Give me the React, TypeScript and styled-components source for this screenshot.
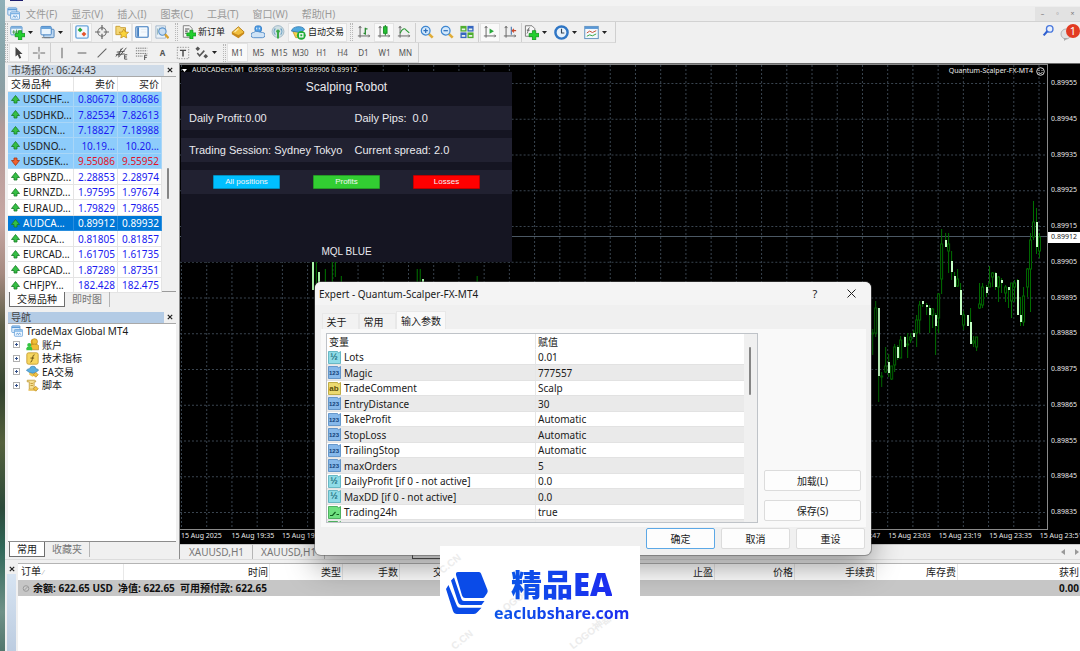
import React from "react";
import styled, { createGlobalStyle, css } from "styled-components";

const ui = `"Noto Sans", "Noto Sans CJK SC", sans-serif`;
const arial = `"Liberation Sans", Arial, sans-serif`;

const GlobalStyle = createGlobalStyle`
  *, *::before, *::after { box-sizing: border-box; }
  body { margin: 0; background: #f0f0f0; font: 10px/14px ${ui}; color: #1a1a1a; overflow: hidden; }
  button { font: inherit; color: inherit; margin: 0; padding: 0; border: 0; background: none; }
  table { border-collapse: separate; border-spacing: 0; }
  th { font-weight: 400; }
  svg { display: block; flex: none; }
`;

/* ---------- frame ---------- */

const Screen = styled.div`
  display: flex;
  min-height: 100vh;
`;
const Wallpaper = styled.div`
  flex: 0 0 5px;
  background: linear-gradient(#8fb0b8 0, #88a5aa 8%, #8c9ea3 14%, #b59a98 20%, #c6a7a3 34%, #a58a80 42%, #5c5f48 50%, #34442f 60%, #54603c 68%, #2c4a3a 78%, #2f6657 84%, #6f9187 94%, #53776d 100%);
`;
const Window = styled.div`
  position: relative;
  display: flex;
  flex-direction: column;
  flex: 1;
  min-width: 0;
  background: #f0f0f0;
`;
const TitleStrip = styled.div`
  height: 6px;
  padding-left: 5px;
  background: #f3f3f3;
`;
const MenuBar = styled.nav`
  display: flex;
  align-items: center;
  gap: 14px;
  height: 16px;
  padding-left: 2px;
  border-bottom: 1px solid #d2d2d2;
  background: #ededed;
  color: #999;
  svg { margin-right: -8px; }
`;
const WindowButtons = styled.div`
  display: flex;
  margin-left: auto;
  background: #e2e2e2;
  button { width: 15px; height: 14px; font-size: 7px; color: #777; }
`;
const Toolbar = styled.div<{ $last?: boolean }>`
  display: flex;
  align-items: center;
  height: ${(p) => (p.$last ? "20px" : "21px")};
  background: #f0f0f0;
`;
const Grip = styled.i`
  width: 3px;
  height: 18px;
  margin: 0 1px 0 3px;
  border: 1px dotted #b8b8b8;
  border-width: 0 1px;
`;
const ToolGroup = styled.div`
  display: flex;
  align-items: center;
  height: 100%;
  padding-right: 2px;
  border-right: 1px solid #cfcfcf;
  border-bottom: 1px solid #d8d8d8;
  > ${Grip}:first-child { margin-left: 0; }
`;
const Separator = styled.i`
  width: 1px;
  height: 19px;
  margin: 0 1px;
  background: #cfcfcf;
`;
const ToolButton = styled.button<{ $on?: boolean; $wide?: boolean }>`
  display: flex;
  align-items: center;
  justify-content: center;
  gap: 2px;
  width: ${(p) => (p.$wide ? "auto" : "20px")};
  padding: ${(p) => (p.$wide ? "0 3px" : "0")};
  height: 19px;
  font-size: 9px;
  white-space: nowrap;
  ${(p) => p.$on && css`background: #f9f9f9; box-shadow: inset 0 0 0 1px #e3e3e3;`}
`;
const SplitButton = styled.button<{ $tight?: boolean }>`
  display: flex;
  align-items: center;
  gap: 3px;
  width: ${(p) => (p.$tight ? "27px" : "30px")};
  height: 19px;
  padding-left: 1px;
`;
const PeriodButton = styled(ToolButton)`
  width: 21px;
  font-size: 8px;
  color: #555;
`;
const ToolbarRight = styled.div`
  display: flex;
  gap: 5px;
  margin-left: auto;
`;

/* ---------- docks ---------- */

const Main = styled.div`
  position: relative;
  display: flex;
  z-index: 1;
`;
const Dock = styled.aside`
  display: flex;
  flex-direction: column;
  flex: 0 0 175px;
  padding: 1px 3px 2px 3px;
  border-right: 1px solid #8c8c8c;
`;
const DockTitle = styled.header<{ $active?: boolean }>`
  display: flex;
  align-items: center;
  height: 12px;
  margin-top: ${(p) => (p.$active ? "4px" : "0")};
  h2 {
    flex: 1;
    margin: 0;
    padding-left: 3px;
    font: 400 10px/11px ${ui};
    height: 11px;
    color: #444;
    background: ${(p) => (p.$active ? "#b3cbe5" : "#cfdbe8")};
  }
  button { width: 12px; height: 11px; display: grid; place-items: center; }
`;
const WatchBox = styled.div`
  display: flex;
  height: 216px;
  border-top: 1px solid #a9a9a9;
  border-bottom: 1px solid #9a9a9a;
  background: #f0f0f0;
`;
const WatchTable = styled.table`
  width: 154px;
  table-layout: fixed;
  background: #fff;
  th, td {
    height: 15px;
    padding: 0 2px 0 0;
    line-height: 14px;
    text-align: right;
    overflow: hidden;
    white-space: nowrap;
    border-right: 1px solid #e4e4e4;
    border-bottom: 1px solid #e4e4e4;
  }
  th:first-child, td:first-child { text-align: left; padding-left: 3px; }
  tbody tr:nth-child(even) td { height: 16px; }
`;
const WatchRow = styled.tr<{ $tone?: string }>`
  color: #1a1af0;
  td:first-child { color: #1a1a1a; }
  ${(p) => (p.$tone === "sky" || p.$tone === "red") && css`background: #8dccfb; td { border-color: #a9d6f7; }`}
  ${(p) => p.$tone === "red" && css`color: #e01428;`}
  ${(p) => p.$tone === "sel" && css`background: #0078d7; color: #fff; td, td:first-child { color: #fff; border-color: #2a8ede; }`}
`;
const SymbolCell = styled.span`
  display: flex;
  align-items: center;
  gap: 3px;
`;
const ScrollTrack = styled.div<{ $offset: number; $size: number }>`
  flex: 1;
  background: #f0f0f0;
  &::before {
    content: "";
    display: block;
    width: 2px;
    height: ${(p) => p.$size}px;
    margin: ${(p) => p.$offset}px 0 0 5px;
    border-radius: 1px;
    background: #858585;
  }
`;
const DockTabs = styled.div`
  display: flex;
  height: 15px;
  padding-left: 1px;
`;
const DockTab = styled.button<{ $on?: boolean }>`
  height: 15px;
  padding: 0 7px;
  color: #777;
  line-height: 13px;
  border-right: 1px solid #b5b5b5;
  ${(p) => p.$on && css`background: #fff; color: #1a1a1a; border: 1px solid #6e6e6e; border-top: 0;`}
`;
const Tree = styled.ul`
  flex: 1;
  margin: 0;
  padding: 0 0 0 3px;
  list-style: none;
  background: #fff;
  border-top: 1px solid #a9a9a9;
  border-bottom: 1px solid #8c8c8c;
  li { display: flex; align-items: center; gap: 3px; height: 14px; white-space: nowrap; }
  li:nth-child(even) { height: 13px; }
`;
const Expander = styled.button`
  width: 7px;
  height: 7px;
  margin: 0 3px 0 2px;
  border: 1px solid #b0b0b0;
  background: linear-gradient(#34508a, #34508a) center / 3px 1px no-repeat, linear-gradient(#34508a, #34508a) center / 1px 3px no-repeat, #fff;
`;

/* ---------- chart ---------- */

const ChartColumn = styled.section`
  position: relative;
  display: flex;
  flex-direction: column;
  flex: 1;
  min-width: 0;
`;
const Chart = styled.div`
  display: grid;
  grid-template-columns: 1fr 32px;
  grid-template-rows: 466px 14px;
  border-top: 1px solid #6a6a6a;
  background: #000;
  color: #e8e8e8;
  font-size: 7px;
  line-height: 10px;
`;
const Plot = styled.div`
  position: relative;
  overflow: hidden;
  border: 1px solid #8a8a8a;
  border-left: 0;
  > svg { width: 100%; height: 100%; }
`;
const PlotCaption = styled.div`
  position: absolute;
  z-index: 1;
  top: 0;
  left: 2px;
  display: flex;
  align-items: center;
  gap: 5px;
  white-space: pre;
`;
const ExpertCaption = styled(PlotCaption)`
  left: auto;
  right: 2px;
  top: 1px;
  gap: 3px;
`;
const PriceAxis = styled.div`
  position: relative;
  display: flex;
  flex-direction: column;
  padding-left: 3px;
  justify-content: space-between;
  height: 439px;
  margin-top: 14px;
`;
const PriceTag = styled.output`
  position: absolute;
  left: 0;
  right: 0;
  top: 154px;
  height: 11px;
  padding-left: 3px;
  background: #fff;
  color: #222;
`;
const TimeAxis = styled.div`
  grid-column: 1 / -1;
  display: grid;
  grid-template-columns: repeat(18, 5.62%);
  overflow: hidden;
  padding-left: 1px;
  line-height: 12px;
  span { white-space: nowrap; }
`;
const ChartTabs = styled.div`
  display: flex;
  align-items: center;
  height: 15px;
  padding-left: 1px;
  color: #777;
  border-top: 1px solid #c8c8c8;
`;
const ChartTab = styled.button<{ $on?: boolean }>`
  height: 14px;
  padding: 0 8px;
  line-height: 13px;
  border-right: 1px solid #b5b5b5;
  ${(p) => p.$on && css`margin-left: 87px; color: #1a1a1a; border: 1px solid #555; border-top: 0;`}
`;
const TabArrows = styled.div`
  display: flex;
  gap: 10px;
  margin-left: auto;
  padding-right: 1px;
`;

const RobotPanel = styled.div`
  position: absolute;
  top: 9px;
  left: 1px;
  width: 331px;
  height: 190px;
  display: flex;
  flex-direction: column;
  gap: 8px;
  background: #151522;
  color: #e9e9ee;
  font: 11px/24px ${arial};
  h3 { margin: 0; height: 26px; font: 400 12px/30px ${arial}; text-align: center; }
  footer { margin-top: auto; font-size: 10px; line-height: 20px; text-align: center; }
`;
const RobotStrip = styled.div`
  display: grid;
  grid-template-columns: 1fr 1fr;
  height: 24px;
  background: #212131;
  span { padding-left: 8px; white-space: pre; }
`;
const RobotActions = styled(RobotStrip)`
  grid-template-columns: repeat(3, 67px);
  justify-content: center;
  align-content: center;
  gap: 33px;
`;
const RobotButton = styled.button<{ $color: string }>`
  height: 14px;
  border: 1px solid rgba(0, 0, 0, 0.25);
  border-radius: 1px;
  background: ${(p) => p.$color};
  color: #f4f4f4;
  font: 8px/12px ${arial};
`;

/* ---------- dialog ---------- */

const Dialog = styled.div`
  position: absolute;
  z-index: 2;
  top: 219px;
  left: 310px;
  width: 556px;
  display: flex;
  flex-direction: column;
  border-radius: 6px;
  background: #f0f0f0;
  box-shadow: 0 0 0 1px rgba(90, 90, 90, 0.5), 0 12px 30px rgba(0, 0, 0, 0.38);
`;
const DialogTitle = styled.header`
  display: flex;
  align-items: center;
  height: 23px;
  padding: 0 13px 0 4px;
  border-radius: 6px 6px 0 0;
  background: #f4f4f4;
  h2 { flex: 1; margin: 0; font: 400 10px/14px ${ui}; }
  button { width: 14px; height: 14px; display: grid; place-items: center; margin-left: 22px; font-size: 11px; }
`;
const DialogTabs = styled.div`
  display: flex;
  align-items: flex-end;
  height: 24px;
  padding-left: 7px;
`;
const DialogTab = styled.button<{ $on?: boolean }>`
  width: ${(p) => (p.$on ? "50px" : "37px")};
  height: ${(p) => (p.$on ? "18px" : "16px")};
  padding-right: ${(p) => (p.$on ? "0" : "8px")};
  line-height: 16px;
  background: ${(p) => (p.$on ? "#f9f9f9" : "#f2f2f2")};
  border: 1px solid #e8e8e8;
  border-bottom: 0;
`;
const DialogPage = styled.div`
  display: flex;
  gap: 6px;
  margin: 0 5px 0 6px;
  padding: 4px 5px;
  height: 198px;
  background: #f9f9f9;
`;
const ParamBox = styled.div`
  display: flex;
  width: 432px;
  height: 190px;
  overflow: hidden;
  border: 1px solid #bfc3c8;
  background: #fff;
`;
const ParamTable = styled.table`
  width: 417px;
  height: 202px;
  flex: none;
  table-layout: fixed;
  th, td {
    height: 15px;
    padding: 0 2px;
    line-height: 14px;
    text-align: left;
    white-space: nowrap;
    border-bottom: 1px solid #e2e2e2;
  }
  th { height: 16px; border-color: #fff; }
  th + th, td + td { border-left: 1px solid #e6e6e6; }
  td:first-child { padding-left: 1px; }
  tbody tr:nth-child(even) td { height: 16px; background: #eaeaea; }
`;
const ParamName = styled.span`
  display: flex;
  align-items: center;
  gap: 3px;
`;
const PageActions = styled.div`
  display: flex;
  flex-direction: column;
  justify-content: flex-end;
  gap: 9px;
  flex: 1;
  padding-bottom: 2px;
`;
const PushButton = styled.button<{ $primary?: boolean }>`
  height: 21px;
  min-width: 69px;
  border: 1px solid ${(p) => (p.$primary ? "#5ca8e6" : "#dcdcdc")};
  border-radius: 2px;
  background: #fdfdfd;
`;
const DialogFooter = styled.footer`
  display: flex;
  justify-content: flex-end;
  gap: 6px;
  padding: 1px 6px 6px;
`;

/* ---------- terminal ---------- */

const Terminal = styled.section`
  display: flex;
  flex: 1;
  border-top: 1px solid #dcdcdc;
  padding-top: 3px;
`;
const TerminalHandle = styled.div`
  flex: 0 0 13px;
  padding-left: 2px;
  button { display: grid; place-items: center; width: 9px; height: 11px; }
  &::after { content: ""; display: block; width: 9px; height: calc(100% - 11px); background: linear-gradient(#d7e4f2, #bccce0); }
`;
const OrdersPane = styled.div`
  flex: 1;
  background: #fff;
  border-top: 1px solid #b4b4b4;
`;
const OrdersTable = styled.table`
  width: 100%;
  table-layout: fixed;
  th, td { height: 16px; padding: 0 1px 0 3px; line-height: 15px; text-align: right; white-space: nowrap; }
  th { border-right: 1px solid #e8e8e8; overflow: hidden; }
  th:last-child { border: 0; }
  th:first-child, td:first-child { text-align: left; }
  td { background: #c6c6c6; font-weight: 700; color: #111; }
`;
const SortMark = styled.span`
  color: #aaa;
  font-size: 7px;
`;
const Balance = styled.span`
  display: flex;
  align-items: center;
  gap: 3px;
  white-space: pre;
`;

const LogoCard = styled.div`
  position: absolute;
  left: 435px;
  bottom: 0;
  width: 200px;
  height: 105px;
  z-index: 2;
  overflow: hidden;
  display: flex;
  gap: 5px;
  padding: 24px 0 0 5px;
  background: #fff;
`;
const LogoText = styled.div`
  position: relative;
  display: flex;
  flex-direction: column;
  align-items: center;
  strong { height: 31px; font: 900 31px/28px "Noto Sans", "Noto Sans CJK SC", sans-serif; }
  strong, span { background: linear-gradient(90deg, #0a55e8, #1d2cf0); background-clip: text; color: transparent; }
  span { font: 700 16px/24px "Noto Sans", sans-serif; }
`;
const Watermark = styled.span<{ $x: number; $y: number }>`
  position: absolute;
  left: ${(p) => p.$x}px;
  top: ${(p) => p.$y}px;
  transform: rotate(-38deg);
  color: #ececec;
  font: 700 10px/12px ${arial};
`;

/* ---------- icons ---------- */

const Caret = () => (
  <svg width="5" height="3" viewBox="0 0 5 3"><path d="M0 0h5L2.500 3z" fill="#222" /></svg>
);
const Cross = () => (
  <svg width="6" height="6" viewBox="0 0 6 6"><path d="M.8.8l4.400 4.400M5.200.8L.8 5.200" stroke="#222" strokeWidth="1.200" /></svg>
);
const plus = <path d="M9 6h3.500v3H16v3.500h-3.500V16H9v-3.500H5.500V9H9z" fill="#22cf2e" stroke="#0c8f18" strokeWidth=".8" />;
const axes = <path d="M3.500 1.500v13M1 12.500h13.500M2 3.500l1.500-2 1.500 2M13 11l1.500 1.500L13 14" fill="none" stroke="#666" strokeWidth="1.100" />;
const lens = (
  <>
    <path d="M9.500 9.500l5 5" stroke="#e0ac38" strokeWidth="3" />
    <circle cx="6.500" cy="6.500" r="5" fill="#d3e8fb" stroke="#3e86d0" strokeWidth="1.400" />
  </>
);
const pic: Record<string, React.ReactNode> = {
  mt4: (<><rect x="1" y="1" width="11" height="9" rx="1" fill="#dcecfb" stroke="#5b9ad6" /><path d="M1 3h11" stroke="#5b9ad6" strokeWidth="2" /><rect x="4.500" y="6" width="11" height="9" rx="1" fill="#eff7ff" stroke="#5b9ad6" /><path d="M4.500 8h11" stroke="#7db3e4" strokeWidth="2" /><path d="M7 13l1.500-2.500L10 13l1.500-2.500L13 13" stroke="#5b9ad6" fill="none" /></>),
  newChart: (<><rect x=".8" y="1.500" width="12" height="9" rx="1" fill="#e9f3fb" stroke="#5d95cc" /><path d="M1 3h12" stroke="#7fb0de" strokeWidth="2" /><path d="M2.500 7.500h7M4 5.500v4M7 5v4" stroke="#3f9a4a" />{plus}</>),
  profiles: (<><rect x="4" y="4.500" width="11" height="9" rx="1" fill="#bcd7f1" stroke="#4f83b8" /><rect x="1" y="1.500" width="11" height="9" rx="1" fill="#e9f4fd" stroke="#3f80c4" /><path d="M1 3.200h11" stroke="#6aa5dc" strokeWidth="2.200" /><path d="M2 13.500h9" stroke="#777" /></>),
  watch: (<><rect x="1" y="1" width="14" height="14" rx="1.500" fill="#f2f8fe" stroke="#6aa5dc" strokeWidth="1.600" /><path d="M5.800 2.800l2.800 2.800-2.800 2.800L3 5.600z" fill="#27a83a" /><path d="M10.200 7.600l2.800 2.800-2.800 2.800-2.800-2.800z" fill="#e4532a" /></>),
  crosshair: (<><circle cx="8" cy="8" r="4.800" fill="none" stroke="#666" strokeWidth="1.200" /><path d="M8 0v6M8 10v6M0 8h6M10 8h6" stroke="#666" strokeWidth="1.400" /></>),
  navigator: (<><path d="M1 1.500h4.500l1 1.500h5.500V11H1z" fill="#f4d777" stroke="#c79a2c" /><path d="M10 4.500l1.700 3.400 3.800.5-2.800 2.600.7 3.800L10 13l-3.400 1.800.7-3.800-2.800-2.600 3.800-.5z" fill="#fbd43a" stroke="#bd8a18" strokeWidth=".8" /></>),
  terminal: (<><rect x="1" y="2" width="14" height="12" rx="1" fill="#f4faff" stroke="#3a78bd" strokeWidth="1.300" /><path d="M3.500 2.500v11" stroke="#3a78bd" strokeWidth="2" /><path d="M7 5h6M7 8h6" stroke="#e2e8ee" /></>),
  tester: (<><path d="M1 1h11v14H1z" fill="#eaf2f9" stroke="#9fb4c8" /><path d="M3 4v7M5 3v6M8 4v8" stroke="#8aa" /><circle cx="8.500" cy="7.500" r="4.200" fill="#c9def2" stroke="#5b93cc" strokeWidth="1.200" /><path d="M11.500 10.500l4 4.500" stroke="#d9a02a" strokeWidth="2.600" /></>),
  order: (<><path d="M1.500.8h7l3 3V14h-10z" fill="#f6f6f6" stroke="#777" /><path d="M3.500 4.500h5M3.500 7h3M3.500 9.500h2" stroke="#555" strokeWidth="1.200" />{plus}</>),
  editor: (<><path d="M1 8.500L8.500 2 15 8l-6.500 6z" fill="#f0be3e" stroke="#b27a13" /><path d="M1 8.500l7.500 3L15 8v2l-6.500 5L1 10.500z" fill="#c98a1b" /><path d="M4 8l4.500-4" stroke="#fdeaa8" strokeWidth="1.500" /></>),
  cloud: (<><rect x="4.500" y="1" width="7.500" height="7" rx="2.500" fill="#4f9ee6" stroke="#2f79c4" /><path d="M6.500 3v2M9.500 3v2" stroke="#fff" /><path d="M3 14.500a3 3 0 010-6q2-2 5-1t5 1a3 3 0 010 6z" fill="#cfe3f6" stroke="#4c87c6" /></>),
  signal: (<><circle cx="8" cy="7.500" r="6.800" fill="#cfdfe4" stroke="#9cb5c4" /><path d="M5 4a5 5 0 000 7M11 4a5 5 0 010 7" fill="none" stroke="#6a9fc4" strokeWidth="1.300" /><circle cx="8" cy="7" r="2" fill="#39a844" /><path d="M8 7.500v8" stroke="#39a844" strokeWidth="2.200" /></>),
  auto: (<><path d="M2 7l10-1.500 1 8H5z" fill="#f6d04a" stroke="#bd9020" strokeWidth=".8" /><path d="M.5 6.500C1 1 13 0 14.500 5L9.500 8z" fill="#4fa8de" stroke="#2b74ad" strokeWidth=".8" /><circle cx="11" cy="11" r="4.700" fill="#22ad38" /><rect x="9.300" y="9.300" width="3.400" height="3.400" fill="none" stroke="#fff" strokeWidth="1.300" /></>),
  bars: (<>{axes}<path d="M9.500 3v8M7.500 9.500h2M9.500 4.500h2.500" stroke="#2a8a32" strokeWidth="1.500" /></>),
  candles: (<>{axes}<path d="M9.500 0v12" stroke="#168a22" strokeWidth="1.200" /><rect x="7.500" y="2" width="4" height="7.500" fill="#25c034" stroke="#168a22" /></>),
  line: (<>{axes}<path d="M3.500 9.500C6 4 9 3 10.500 6l3.500 3" fill="none" stroke="#2a9a34" strokeWidth="1.300" /></>),
  zoomIn: (<>{lens}<path d="M4 6.500h5M6.500 4v5" stroke="#2d6db8" strokeWidth="1.400" /></>),
  zoomOut: (<>{lens}<path d="M4 6.500h5" stroke="#2d6db8" strokeWidth="1.400" /></>),
  tile: (<><rect x=".5" y="1" width="7" height="6.500" fill="#4fae2f" /><rect x="8.500" y="1" width="7" height="6.500" fill="#3566c0" /><rect x=".5" y="8.500" width="7" height="6.500" fill="#3566c0" /><rect x="8.500" y="8.500" width="7" height="6.500" fill="#4fae2f" /><path d="M2 5h4M10 5h4M2 12.500h4M10 12.500h4" stroke="#e8f2e8" strokeWidth="2" /></>),
  scroll: (<>{axes}<path d="M7.500 4v6l5-3z" fill="#27a83a" /></>),
  shift: (<>{axes}<path d="M9.500 2v9" stroke="#4a78b0" strokeWidth="1.300" /><path d="M15 6.500h-4M12.500 4.500l-2 2 2 2" stroke="#c8482c" strokeWidth="1.300" fill="none" /></>),
  indicators: (<><path d="M1.500.8h7l3 3V12h-10z" fill="#f6f6f6" stroke="#777" /><path d="M6 3c-2-.5-1.500 6-3 6M3 5.500h3" fill="none" stroke="#555" />{plus}</>),
  clock: (<><circle cx="8" cy="8" r="6.500" fill="#e8f2fb" stroke="#2f76c5" strokeWidth="2.600" /><path d="M8 4v4.500h3" fill="none" stroke="#345" strokeWidth="1.200" /></>),
  template: (<><rect x=".8" y="1.500" width="14.400" height="13" fill="#f4f9fd" stroke="#5d8fbd" /><path d="M1 3h14" stroke="#5a98d6" strokeWidth="2.400" /><path d="M3 8.500l3-2 3 1.500 4-2" fill="none" stroke="#c8482c" /><path d="M3 12l3-1.500 3 1 4-2" fill="none" stroke="#2f9e3b" /></>),
  cursor: <path d="M4 1l8 8H8.500l2 4.500-2 1-2-4.500L4 12z" fill="#444" />,
  cross: <path d="M8 1v5.500M8 9.500V15M1 8h5.500M9.500 8H15M7.500 8h1" stroke="#666" strokeWidth="1.100" />,
  vline: <path d="M8 2v12" stroke="#666" strokeWidth="1.200" />,
  hline: <path d="M3 8h10" stroke="#666" strokeWidth="1.200" />,
  trend: <path d="M3 13L13 3" stroke="#666" strokeWidth="1.200" />,
  channel: (<><path d="M1 12L9 2M4 13l9-11M2 7l9-1M1 10l10-1M7 3l-3 9" stroke="#555" strokeWidth="1.100" /><path d="M14 10h-3v5h3M11 12.500h2.500" fill="none" stroke="#444" /></>),
  fibo: (<><path d="M1 2.500h13M1 5.500h13M1 8.500h13M1 11.500h8" stroke="#666" strokeDasharray="1.500 1" /><path d="M14 10.500h-3V16M11 13h2.500" fill="none" stroke="#444" /></>),
  label: (<><rect x="1.500" y="1.500" width="13" height="13" fill="none" stroke="#888" strokeDasharray="1.500 1.500" /><path d="M4.500 5h7M8 5v7" stroke="#444" strokeWidth="1.600" /></>),
  arrows: (<><path d="M4 1.500L6.500 4 4 6.500 1.500 4zM12.500 9.500L15 12l-2.500 2.500L10 12z" fill="#555" /><path d="M3.500 8.500l2.500 3 5-5.500" fill="none" stroke="#555" strokeWidth="1.600" /></>),
  search: (<><circle cx="9.500" cy="6" r="4" fill="#eaf1fd" stroke="#4a78dc" strokeWidth="1.700" /><path d="M6.500 9L2 14" stroke="#2f5fd0" strokeWidth="2.600" /></>),
  account: (<><circle cx="10.500" cy="4.500" r="3.700" fill="#f0c038" stroke="#a57413" strokeWidth=".7" /><path d="M6 14.500V4q0-2.500 2-2.500v13z" fill="#d99c1e" /><path d="M6 14.500V9.500q0-2 4.500-2t5 2v5z" fill="#f0bd35" stroke="#a57413" strokeWidth=".7" /><circle cx="4" cy="8.500" r="2.500" fill="#35c542" /><path d="M.5 15v-2.500q0-2 3.500-2t3.500 2V15z" fill="#35c542" /></>),
  fx: (<><rect x="1" y="1" width="14" height="14" rx="2" fill="#f6d660" stroke="#c3982a" /><path d="M10.500 3.500c-3-.8-2 9-5 9M5.500 7.500h4.500" fill="none" stroke="#6b5312" strokeWidth="1.200" /></>),
  expert: (<><path d="M4 9l7 .5v3L8 14.500l-4-2.500z" fill="#efc64d" /><path d="M.5 6.500Q2 4.500 4.500 4.500 5 1.500 8.500 1.500T12 4.500q3 0 3.500 2Q12 10 8 10T.5 6.500z" fill="#5aaee0" stroke="#2e78ad" strokeWidth=".8" /><path d="M12 9l3 3-3 3-3-3z" fill="#f3c443" stroke="#b0801a" strokeWidth=".8" /></>),
  script: (<><path d="M1.500 1.500h9q1.500 0 1.500 2h-2v9H4v-9H1.500z" fill="#f6df90" stroke="#c09a36" /><path d="M3 12.500h8v2H3z" fill="#e7be55" /><path d="M5.500 5.500h3M5.500 8h3" stroke="#b98e2c" /><path d="M12 9l3 3-3 3-3-3z" fill="#f3c443" stroke="#b0801a" strokeWidth=".8" /></>),
};
const Icon = ({ name, size = 14 }: { name: string; size?: number }) => (
  <svg width={size} height={size} viewBox="0 0 16 16" aria-hidden="true">{pic[name]}</svg>
);

const Tick = ({ down }: { down?: boolean }) => (
  <svg width="9" height="9" viewBox="0 0 9 9">
    <path d={down ? "M3 1h3v2.500h2.500L4.500 8.500.5 3.500H3z" : "M3 8h3V5.500h2.500L4.500.5.5 5.500H3z"} fill={down ? "#f0612f" : "#35c044"} stroke={down ? "#a8330f" : "#167a24"} strokeWidth=".8" />
  </svg>
);

const kinds: Record<string, [string, string, string, string, number]> = {
  real: ["#8fdbe6", "#4fa9b8", "#1b6f80", "½", 9],
  int: ["#86b8ea", "#4f86c0", "#103f78", "123", 6],
  str: ["#ecd96f", "#b39d2c", "#5d4d08", "ab", 8],
  bool: ["#6fe080", "#35a148", "#12601f", "", 0],
};
const KindIcon = ({ kind }: { kind: string }) => {
  const [fill, line, ink, text, size] = kinds[kind];
  return (
    <svg width="13" height="13" viewBox="0 0 13 13">
      <path d="M.5.5h9l1 1.500 2-1.500v12H.5z" fill={fill} stroke={line} strokeWidth=".8" />
      {text ? (
        <text x="6" y="9" textAnchor="middle" fontSize={size} fontWeight="700" fill={ink} fontFamily="Liberation Sans">{text}</text>
      ) : (
        <path d="M2 9.500h2.500l3-3.500M8.500 8.500H11" stroke={ink} strokeWidth="1.200" fill="none" />
      )}
    </svg>
  );
};

/* ---------- data ---------- */

const quotes: [string, string, string, string?][] = [
  ["USDCHF...", "0.80672", "0.80686", "sky"],
  ["USDHKD...", "7.82534", "7.82613", "sky"],
  ["USDCN...", "7.18827", "7.18988", "sky"],
  ["USDNO...", "10.19...", "10.20...", "sky"],
  ["USDSEK...", "9.55086", "9.55952", "red"],
  ["GBPNZD...", "2.28853", "2.28974"],
  ["EURNZD...", "1.97595", "1.97674"],
  ["EURAUD...", "1.79829", "1.79865"],
  ["AUDCA...", "0.89912", "0.89932", "sel"],
  ["NZDCA...", "0.81805", "0.81857"],
  ["EURCAD...", "1.61705", "1.61735"],
  ["GBPCAD...", "1.87289", "1.87351"],
  ["CHFJPY...", "182.428", "182.475"],
];

const params: [string, string, string][] = [
  ["real", "Lots", "0.01"],
  ["int", "Magic", "777557"],
  ["str", "TradeComment", "Scalp"],
  ["int", "EntryDistance", "30"],
  ["int", "TakeProfit", "Automatic"],
  ["int", "StopLoss", "Automatic"],
  ["int", "TrailingStop", "Automatic"],
  ["int", "maxOrders", "5"],
  ["real", "DailyProfit [if 0 - not active]", "0.0"],
  ["real", "MaxDD [if 0 - not active]", "0.0"],
  ["bool", "Trading24h", "true"],
  ["bool", "", ""],
];

const prices = Array.from({ length: 13 }, (_, i) => (0.89955 - i * 0.0001).toFixed(5));
const times = Array.from({ length: 18 }, (_, i) => {
  if (i === 0) return "15 Aug 2025";
  const m = 19 * 60 + 35 + (i - 1) * 16;
  return `15 Aug ${Math.floor(m / 60)}:${String(m % 60).padStart(2, "0")}`;
});

/* high, low, open/close extent, 1 = falling */
const session: [number, number, number, number, number][] = [
  [418, 494, 430, 430, 0], [333, 440, 355, 430, 0], [355, 635, 355, 557, 1], [545, 590, 557, 560, 0],
  [472, 550, 527, 545, 0], [492, 560, 515, 548, 1], [527, 570, 527, 568, 0], [462, 545, 470, 525, 0],
  [465, 510, 472, 505, 1], [438, 505, 450, 505, 0], [438, 472, 440, 472, 1], [430, 505, 462, 464, 0],
  [430, 460, 440, 450, 0], [420, 440, 430, 440, 1], [375, 472, 390, 428, 0], [332, 430, 345, 390, 0],
  [333, 352, 333, 342, 1], [340, 375, 345, 352, 1], [345, 430, 355, 375, 1], [355, 415, 356, 376, 0],
  [368, 494, 375, 407, 1], [308, 430, 312, 385, 0], [118, 312, 162, 268, 0], [130, 172, 150, 172, 1],
  [130, 248, 162, 182, 0], [182, 270, 213, 247, 1], [247, 290, 258, 290, 1], [238, 292, 268, 288, 0],
  [278, 375, 300, 375, 1], [362, 420, 375, 405, 0], [375, 408, 375, 408, 1], [355, 462, 397, 462, 1],
  [437, 472, 452, 460, 0], [440, 482, 442, 472, 0], [278, 358, 342, 355, 0], [280, 353, 290, 345, 0],
  [285, 322, 290, 310, 1], [228, 290, 280, 290, 0], [245, 290, 248, 260, 0], [245, 300, 248, 290, 1],
  [258, 335, 260, 290, 0], [265, 308, 270, 280, 1], [285, 335, 290, 310, 0], [290, 355, 290, 300, 1],
  [278, 385, 280, 332, 0], [270, 335, 280, 290, 0], [268, 375, 270, 375, 1], [322, 408, 375, 397, 1],
  [290, 407, 318, 397, 0], [235, 320, 238, 290, 0], [130, 365, 150, 238, 0], [33, 150, 97, 140, 0],
  [55, 192, 97, 172, 1], [130, 205, 140, 182, 0],
];
const early: [number, number, number, number][] = [
  [133, 262, 290, 1], [136, 262, 290, 0], [139, 272, 285, 1], [145, 269, 285, 0], [152, 262, 285, 0],
  [155, 262, 277, 0], [161, 276, 285, 0], [237, 269, 285, 0], [240, 269, 285, 0], [243, 279, 285, 1], [297, 276, 285, 0],
];

const ChartDrawing = () => (
  <svg viewBox="0 0 868 464" preserveAspectRatio="none" shapeRendering="crispEdges">
    {Array.from({ length: 35 }, (_, i) => (
      <line key={i} x1={860 - i * 25.25} x2={860 - i * 25.25} y1="0" y2="464" stroke="#3a4550" strokeDasharray="2 2" />
    ))}
    {prices.map((p, i) => (
      <line key={p} x1="0" x2="868" y1={18.500 + i * 35.75} y2={18.500 + i * 35.75} stroke="#3a4550" strokeDasharray="2 2" />
    ))}
    <line x1="0" x2="868" y1="171.500" y2="171.500" stroke="#4b5864" />
    {early.map(([x, a, b, fall]) => (
      <line key={x} x1={x + 0.5} x2={x + 0.5} y1={a - 65} y2={b - 65} stroke={fall ? "#a8f5a8" : "#007a00"} strokeWidth={fall ? 2 : 1} />
    ))}
    {session.map(([h, l, a, b, fall], i) => {
      const x = Math.round(693 + i * 3.155);
      const y = (v: number) => Math.round(125 + v / 3);
      return (
        <g key={i}>
          <line x1={x + 0.5} x2={x + 0.5} y1={y(h)} y2={y(l)} stroke="#007000" />
          <rect x={x - 0.5} y={y(a)} width="2" height={Math.max(1, y(b) - y(a))} fill={fall ? "#c4ffc4" : "#000"} stroke={fall ? "none" : "#006800"} strokeWidth="1" />
        </g>
      );
    })}
  </svg>
);

const headers: [string, number?][] = [
  ["订单", 106], ["时间", 146], ["类型", 73], ["手数", 57], ["交易品种", 75], ["价格", 81], ["止损", 79],
  ["止盈", 80], ["价格", 80], ["手续费", 82], ["库存费", 81], ["获利"],
];

const tool = (name: string, label: string, on = false) => (
  <ToolButton key={name} aria-label={label} $on={on}><Icon name={name} /></ToolButton>
);
const split = (name: string, label: string, tight = false) => (
  <SplitButton aria-label={label} $tight={tight}><Icon name={name} size={15} /><Caret /></SplitButton>
);

export default function App() {
  return (
    <Screen>
      <GlobalStyle />
      <Wallpaper />
      <Window>
        <TitleStrip><svg width="13" height="2"><rect width="13" height="1" fill="#1c1c6e" /></svg></TitleStrip>
        <MenuBar>
          <Icon name="mt4" size={13} />
          {["文件(F)", "显示(V)", "插入(I)", "图表(C)", "工具(T)", "窗口(W)", "帮助(H)"].map((m) => <span key={m}>{m}</span>)}
          <WindowButtons><button>–</button><button>▫</button><button>×</button></WindowButtons>
        </MenuBar>
        <Toolbar>
          <ToolGroup>
            <Grip />
            {split("newChart", "新图表")}
            {split("profiles", "配置文件")}
            <Separator />
            {tool("watch", "市场报价", true)}
            {tool("crosshair", "数据窗口")}
            {tool("navigator", "导航", true)}
            {tool("terminal", "终端", true)}
            {tool("tester", "测试")}
            <Grip />
            <ToolButton $wide><Icon name="order" />新订单</ToolButton>
            {tool("editor", "编辑器")}
            {tool("cloud", "社区")}
            {tool("signal", "信号")}
            <ToolButton $wide $on><Icon name="auto" size={15} />自动交易</ToolButton>
            <Grip />
            {tool("bars", "柱状图")}
            {tool("candles", "阴阳烛", true)}
            {tool("line", "折线图")}
            <Separator />
            {tool("zoomIn", "放大")}
            {tool("zoomOut", "缩小")}
            {tool("tile", "平铺")}
            <Separator />
            {tool("scroll", "自动滚动", true)}
            {tool("shift", "图表平移")}
            <Separator />
            {split("indicators", "指标")}
            {split("clock", "周期")}
            {split("template", "模板")}
          </ToolGroup>
          <ToolbarRight>
            <Icon name="search" size={13} />
            <svg width="20" height="17" viewBox="0 0 20 17">
              <circle cx="6" cy="10" r="5" fill="#e2e2e2" stroke="#b5b5b5" />
              <path d="M4 14l0 3 4-3z" fill="#aaa" />
              <circle cx="13" cy="7" r="7" fill="#e23b22" />
              <text x="13" y="11" textAnchor="middle" fontSize="11" fill="#fff" fontFamily="Noto Sans">1</text>
            </svg>
          </ToolbarRight>
        </Toolbar>
        <Toolbar $last>
          <ToolGroup>
            <Grip />
            {tool("cursor", "光标", true)}
            {tool("cross", "十字准线")}
            <Separator />
            {tool("vline", "垂直线")}
            {tool("hline", "水平线")}
            {tool("trend", "趋势线")}
            {tool("channel", "通道")}
            {tool("fibo", "斐波那契")}
            <PeriodButton><b>A</b></PeriodButton>
            {tool("label", "文本标签")}
            {split("arrows", "箭头", true)}
            <Grip />
            {["M1", "M5", "M15", "M30", "H1", "H4", "D1", "W1", "MN"].map((p) => <PeriodButton key={p} $on={p === "M1"}>{p}</PeriodButton>)}
          </ToolGroup>
        </Toolbar>

        <Main>
          <Dock>
            <DockTitle><h2>市场报价: 06:24:43</h2><button aria-label="关闭"><Cross /></button></DockTitle>
            <WatchBox>
              <WatchTable>
                <colgroup><col width="66" /><col width="44" /><col width="44" /></colgroup>
                <thead><tr><th>交易品种</th><th>卖价</th><th>买价</th></tr></thead>
                <tbody>
                  {quotes.map(([s, bid, ask, tone]) => (
                    <WatchRow key={s} $tone={tone}>
                      <td><SymbolCell><Tick down={tone === "red"} />{s}</SymbolCell></td>
                      <td>{bid}</td>
                      <td>{ask}</td>
                    </WatchRow>
                  ))}
                </tbody>
              </WatchTable>
              <ScrollTrack $offset={91} $size={31} />
            </WatchBox>
            <DockTabs><DockTab $on>交易品种</DockTab><DockTab>即时图</DockTab></DockTabs>
            <DockTitle $active><h2>导航</h2><button aria-label="关闭"><Cross /></button></DockTitle>
            <Tree>
              <li><Icon name="mt4" size={12} />TradeMax Global MT4</li>
              {[["account", "账户"], ["fx", "技术指标"], ["expert", "EA交易"], ["script", "脚本"]].map(([i, t]) => (
                <li key={t}><Expander aria-label={"展开" + t} /><Icon name={i} size={13} />{t}</li>
              ))}
            </Tree>
            <DockTabs><DockTab $on>常用</DockTab><DockTab>收藏夹</DockTab></DockTabs>
          </Dock>

          <ChartColumn>
            <Chart>
              <Plot>
                <ChartDrawing />
                <PlotCaption>
                  <svg width="5" height="3"><path d="M0 0h5L2.500 3z" fill="#fff" /></svg>
                  {"AUDCADecn.M1  0.89908 0.89913 0.89906 0.89912"}
                </PlotCaption>
                <ExpertCaption>
                  Quantum-Scalper-FX-MT4
                  <svg width="9" height="9" viewBox="0 0 9 9"><circle cx="4.500" cy="4.500" r="3.800" fill="none" stroke="#eee" strokeWidth=".9" /><path d="M3 3v1M6 3v1M2.500 5.500q2 2 4 0" fill="none" stroke="#eee" strokeWidth=".9" /></svg>
                </ExpertCaption>
              </Plot>
              <PriceAxis>
                {prices.map((p) => <span key={p}>{p}</span>)}
                <PriceTag>0.89912</PriceTag>
              </PriceAxis>
              <TimeAxis>{times.map((t) => <span key={t}>{t}</span>)}</TimeAxis>
            </Chart>
            <ChartTabs>
              <ChartTab>XAUUSD,H1</ChartTab>
              <ChartTab>XAUUSD,H1</ChartTab>
              <ChartTab $on>AUDCADecn,M1</ChartTab>
              <TabArrows>
                <svg width="4" height="6"><path d="M4 0v6L0 3z" fill="#999" /></svg>
                <svg width="4" height="6"><path d="M0 0v6l4-3z" fill="#999" /></svg>
              </TabArrows>
            </ChartTabs>

            <RobotPanel>
              <h3>Scalping Robot</h3>
              <RobotStrip><span>Daily Profit:0.00</span><span>{"Daily Pips:  0.0"}</span></RobotStrip>
              <RobotStrip><span>Trading Session: Sydney Tokyo</span><span>Current spread: 2.0</span></RobotStrip>
              <RobotActions>
                <RobotButton $color="#00bfff">All positions</RobotButton>
                <RobotButton $color="#32cd32">Profits</RobotButton>
                <RobotButton $color="#ff0000">Losses</RobotButton>
              </RobotActions>
              <footer>MQL BLUE</footer>
            </RobotPanel>
          </ChartColumn>

          <Dialog role="dialog" aria-labelledby="expert-title">
            <DialogTitle>
              <h2 id="expert-title">Expert - Quantum-Scalper-FX-MT4</h2>
              <button aria-label="帮助">?</button>
              <button aria-label="关闭"><svg width="9" height="9" viewBox="0 0 9 9"><path d="M.5.5l8 8M8.500.5l-8 8" stroke="#222" /></svg></button>
            </DialogTitle>
            <DialogTabs>
              <DialogTab>关于</DialogTab>
              <DialogTab>常用</DialogTab>
              <DialogTab $on>输入参数</DialogTab>
            </DialogTabs>
            <DialogPage>
              <ParamBox>
                <ParamTable>
                  <colgroup><col width="208" /><col /></colgroup>
                  <thead><tr><th>变量</th><th>赋值</th></tr></thead>
                  <tbody>
                    {params.map(([k, n, v], i) => (
                      <tr key={i}><td><ParamName><KindIcon kind={k} />{n}</ParamName></td><td>{v}</td></tr>
                    ))}
                  </tbody>
                </ParamTable>
                <ScrollTrack $offset={13} $size={48} />
              </ParamBox>
              <PageActions>
                <PushButton>加载(L)</PushButton>
                <PushButton>保存(S)</PushButton>
              </PageActions>
            </DialogPage>
            <DialogFooter>
              <PushButton $primary>确定</PushButton>
              <PushButton>取消</PushButton>
              <PushButton>重设</PushButton>
            </DialogFooter>
          </Dialog>
        </Main>

        <Terminal>
          <TerminalHandle><button aria-label="关闭"><Cross /></button></TerminalHandle>
          <OrdersPane>
            <OrdersTable>
              <colgroup>{headers.map(([, w], i) => <col key={i} width={w} />)}</colgroup>
              <thead><tr>{headers.map(([h], i) => <th key={i}>{h}{i === 0 && <SortMark> ⁄</SortMark>}</th>)}</tr></thead>
              <tbody>
                <tr>
                  <td colSpan={11}>
                    <Balance>
                      <svg width="9" height="9" viewBox="0 0 9 9"><circle cx="5" cy="4.500" r="2.800" fill="#ccc" stroke="#999" /><path d="M3.500 6l3-3" stroke="#999" /></svg>
                      {"余额: 622.65 USD  净值: 622.65  可用预付款: 622.65"}
                    </Balance>
                  </td>
                  <td>0.00</td>
                </tr>
              </tbody>
            </OrdersTable>
          </OrdersPane>
        </Terminal>

        <LogoCard>
          <Watermark $x={-2} $y={12}>C.CN</Watermark>
          <Watermark $x={54} $y={46}>LOGO神器</Watermark>
          <Watermark $x={10} $y={88}>C.CN</Watermark>
          <Watermark $x={126} $y={80}>LOGO神器</Watermark>
          <svg width="44" height="46" viewBox="0 0 44 46">
            <path d="M13 2h21q1.500 0 2 1.500L42.500 20q.5 1.500-.3 3L39.500 27q-.5 1-2 1H20q-2 0-3-2.500L11 5q-.5-3 2-3z" fill="#0a4be8" />
            <path d="M9 7.500L6 10.500 13 32q1 3 4 3h19.500l3-4H19q-2 0-2.600-2z" fill="#0a4be8" />
            <path d="M3.500 15L1 19l7 22q1 3 4 3h17q2 0 3.500-2l4-4.200H15q-2.500 0-3.300-2.500z" fill="#0a4be8" />
          </svg>
          <LogoText><strong>精品EA</strong><span>eaclubshare.com</span></LogoText>
        </LogoCard>
      </Window>
    </Screen>
  );
}
